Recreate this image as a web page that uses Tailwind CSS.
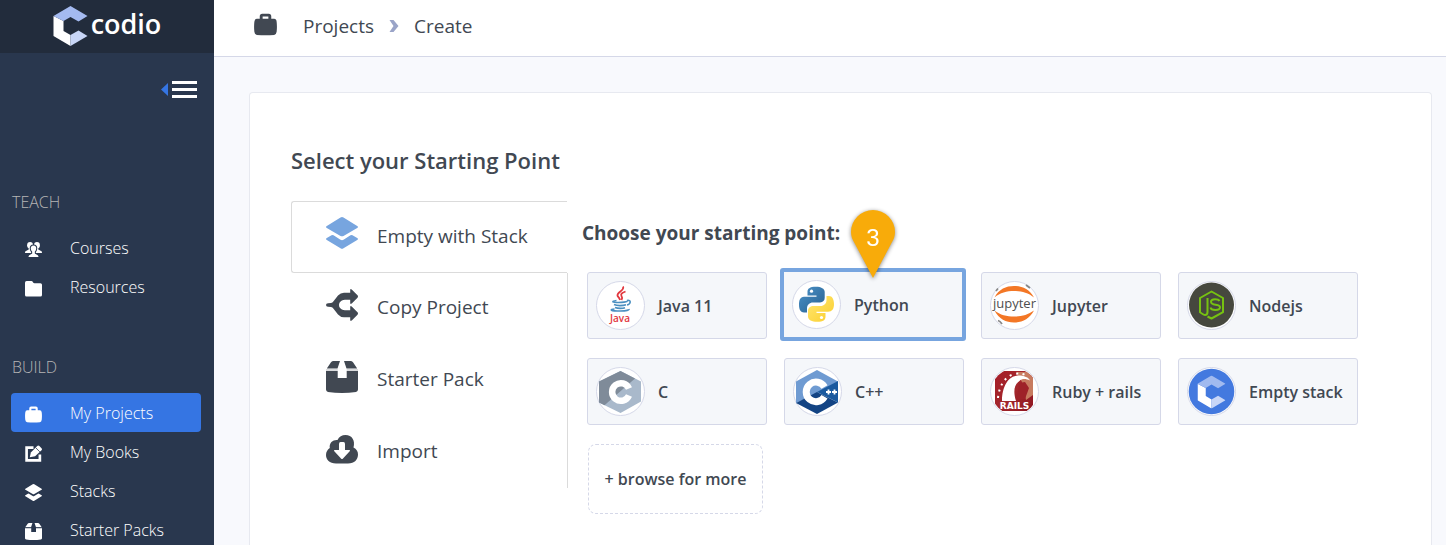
<!DOCTYPE html>
<html lang="en">
<head>
<meta charset="utf-8">
<meta name="viewport" content="width=device-width, initial-scale=1">
<title>Codio - Create Project</title>
<script src="https://cdn.jsdelivr.net/npm/@tailwindcss/browser@4"></script>
</head>
<body class="flex h-screen overflow-hidden bg-[#f8f9fd] font-['Open_Sans',sans-serif] text-[#414852]">
<svg class="hidden" aria-hidden="true">
  <symbol id="briefcase" viewBox="0 0 32 32"><path fill="currentColor" fill-rule="evenodd" d="M8 8V4.500Q8 1 11.500 1h9Q24 1 24 4.500V8h4q3 0 3.500 4 .8 7 0 14-.5 4-3.500 4.500-12 1-24 0Q1 30 .5 26q-.8-7 0-14Q1 8 4 8zM12 8h8V5h-8z"/></symbol>
  <symbol id="layers" viewBox="0 0 32 32"><path fill="currentColor" d="M14.500.6Q16-.4 17.500.6L31.200 9q1.600 1 0 2L17.500 18.900q-1.500.9-3 0L.8 11q-1.600-1 0-2zM.8 21 5.500 18.200q1-.6 2 0l7 4.500q1.500.9 3 0l7-4.500q1-.6 2 0L31.200 21q1.600 1 0 2L17.500 31.300q-1.500 1-3 0L.8 23q-1.600-1 0-2z"/></symbol>
  <symbol id="share" viewBox="0 0 32 32"><path fill="currentColor" fill-rule="evenodd" d="M0 16Q0 14.300 2 14.200l3-.2q1.500-.2 2.500-1.800L12 6.500Q14.500 3.700 18 3.700h6.200V1.200Q24.200-.8 26 .8l5.500 5.500q1 1.200 0 2.400L26 14.200q-1.800 1.600-1.800-.5v-3H19q-3.500 0-5.500 3-1 2.300 0 4.600 2 3 5.500 3h5.200v-3q0-2.100 1.800-.5l5.500 5.500q1 1.200 0 2.400L26 31.200q-1.800 1.600-1.800-.4v-2.500H18q-3.500 0-6-2.800l-4.500-5.700Q6.500 18.200 5 18l-3-.2Q0 17.700 0 16z"/></symbol>
  <symbol id="box" viewBox="0 0 32 32"><path fill="currentColor" d="M7.500 0H14l-2.500 7.500H.8L5 1.300Q6 0 7.500 0zM18 0h6.500Q26 0 27 1.300l4.200 6.200H20.500zM0 10h11.700v7h9v-7H32v18.500q0 2-2 2.400-14 2-28 0-2-.4-2-2.400z"/><path fill="currentColor" opacity=".2" d="M0 8h11.700v2H0zM20.700 8H32v2H20.700z"/></symbol>
  <symbol id="cloud" viewBox="0 0 32 32"><path fill="currentColor" fill-rule="evenodd" d="M3.800 15C3 9.500 7.300 6.500 11.500 7 13 3.500 16 2 19.500 2 26 2 29.500 7.500 27.500 14.500 30.500 16 32 18.500 32 21.500c0 5-3.500 9-10 9H10C3.500 30.500 0 26.500 0 22c0-3 1.500-5.500 3.800-7zM13 11v6H8.800q-1.500 0-.5 1.300l6.700 7.200q1 1 2 0l6.700-7.200q1-1.300-.5-1.300H19v-6q0-2-1.500-2h-3Q13 9 13 11z"/></symbol>
  <symbol id="users" viewBox="0 0 32 32"><g fill="currentColor"><ellipse cx="9.500" cy="8" rx="5.500" ry="6"/><ellipse cx="22.500" cy="8" rx="5.500" ry="6"/><path d="M7 12h18v4l6 3.500q1 .7 1 3H0q0-2.300 1-3L7 16z"/></g><path fill="currentColor" stroke="#29374e" stroke-width="2" d="M16 7.500c4.500 0 6.500 3 6 7.500-.3 2.500-1.500 4-2.500 5.500v2.500l5 3q2 1.200 2 5h-21q0-3.800 2-5l5-3v-2.500C11.500 19 10.300 17.500 10 15c-.5-4.500 1.500-7.500 6-7.500z"/></symbol>
  <symbol id="folder" viewBox="0 0 32 32"><path fill="currentColor" d="M3 2h9q2 0 3 2t3 2h11q3 0 3 3v19q0 3-3 3H3q-3 0-3-3V5q0-3 3-3z"/></symbol>
  <symbol id="edit" viewBox="0 0 32 32"><path fill="none" stroke="currentColor" stroke-width="5" d="M16 5H3v24h25V18"/><path fill="currentColor" d="m9 23 2-9L23 2q2-2 4 0l4 4q2 2 0 4L19 21z"/><path stroke="#29374e" stroke-width="1.500" d="m20 5 8 8"/></symbol>
  <symbol id="codio" viewBox="0 0 34 40"><path fill="#fff" d="M0 10 10 15v10l7 4v11L0 30z"/><path class="fill-(--top)" d="M0 10 17 0l17 10-9 5.500-8-4.500-7 4z"/><path fill="#c8d6f7" d="M17 29v11l17-10-9-5.500z"/></symbol>
</svg>

<aside class="flex w-[214px] shrink-0 flex-col bg-[#29374e]">
  <a href="#" aria-label="Codio" class="flex h-[53px] shrink-0 items-center justify-center gap-[3px] bg-[#222c3c] pb-[2px] text-white">
    <svg class="h-10 w-[35px] [--top:#a4baf0]"><use href="#codio"/></svg>
    <span class="pb-1 text-[27px] leading-8 font-semibold">codio</span>
  </a>
  <button type="button" aria-label="Collapse menu" class="mt-7 mr-[17px] flex h-6 items-center gap-1 self-end">
    <svg class="h-[13px] w-[7px]" viewBox="0 0 7 13"><path fill="#3575e3" d="M7 0v13L0 6.500z"/></svg>
    <svg class="h-[17px] w-[25px]" viewBox="0 0 25 17"><path stroke="#fff" stroke-width="3" d="M0 1.500h25M0 8.500h25M0 15.500h25"/></svg>
  </button>
  <nav class="mt-[92px] text-base font-light text-white">
    <h2 class="px-3 leading-6 font-light text-[#b5b5b5]">TEACH</h2>
    <ul class="mt-[14px] mr-[13px] ml-[11px]">
      <li><a href="#" class="flex h-[39px] items-center gap-7 pl-[14px]"><svg class="mt-1 size-[17px]"><use href="#users"/></svg>Courses</a></li>
      <li><a href="#" class="flex h-[39px] items-center gap-7 pl-[14px]"><svg class="mt-1 size-[17px]"><use href="#folder"/></svg>Resources</a></li>
    </ul>
    <h2 class="mt-[49px] px-3 leading-6 font-light text-[#b5b5b5]">BUILD</h2>
    <ul class="mt-[14px] mr-[13px] ml-[11px]">
      <li><a href="#" aria-current="page" class="flex h-[39px] items-center gap-7 rounded bg-[#3575e3] pl-[14px]"><svg class="mt-1 size-[17px]"><use href="#briefcase"/></svg>My Projects</a></li>
      <li><a href="#" class="flex h-[39px] items-center gap-7 pl-[14px]"><svg class="mt-1 size-[17px]"><use href="#edit"/></svg>My Books</a></li>
      <li><a href="#" class="flex h-[39px] items-center gap-7 pl-[14px]"><svg class="mt-1 size-[17px]"><use href="#layers"/></svg>Stacks</a></li>
      <li><a href="#" class="flex h-[39px] items-center gap-7 pl-[14px]"><svg class="mt-1 size-[17px]"><use href="#box"/></svg>Starter Packs</a></li>
    </ul>
  </nav>
</aside>

<div class="flex min-w-0 flex-1 flex-col">
  <header class="flex h-[57px] shrink-0 items-center border-b border-[#d5d8e8] bg-white pb-1 pl-10 text-[19px]">
    <svg class="mr-[26px] mb-1 size-[23px]"><use href="#briefcase"/></svg>
    <nav aria-label="Breadcrumb" class="flex items-center gap-[15px]">
      <a href="#">Projects</a>
      <svg class="h-3 w-[10px]" viewBox="0 0 9 12"><path fill="#9aa4c8" d="M0 0h4l5 6-5 6H0l4-6z"/></svg>
      <span aria-current="page">Create</span>
    </nav>
  </header>

  <main class="mt-[35px] mr-[14px] ml-[35px] flex-1 rounded-t border border-b-0 border-[#e7e9f0] bg-white pt-[51px] pl-[41px]">
    <h1 class="text-[22px] leading-8 font-semibold">Select your Starting Point</h1>
    <div class="mt-[25px] flex items-start">
      <div role="tablist" class="grid h-[287px] w-[277px] shrink-0 grid-rows-4 text-[19px]">
        <button type="button" role="tab" aria-selected="true" class="mr-px flex items-center gap-[19px] rounded-l-[3px] border border-r-0 border-[#dbdbdb] pb-[2px] pl-[34px]"><svg class="mb-1.5 size-8 text-[#77a5df]"><use href="#layers"/></svg>Empty with Stack</button>
        <button type="button" role="tab" aria-selected="false" class="flex items-center gap-[19px] border-r border-[#dbdbdb] pb-[2px] pl-[35px]"><svg class="mb-1.5 size-8"><use href="#share"/></svg>Copy Project</button>
        <button type="button" role="tab" aria-selected="false" class="flex items-center gap-[19px] border-r border-[#dbdbdb] pb-[2px] pl-[35px]"><svg class="mb-1 size-8"><use href="#box"/></svg>Starter Pack</button>
        <button type="button" role="tab" aria-selected="false" class="flex items-center gap-[19px] border-r border-[#dbdbdb] pb-[2px] pl-[35px]"><svg class="mb-1 size-8"><use href="#cloud"/></svg>Import</button>
      </div>

      <section role="tabpanel" class="pt-[18px] pl-[14px]">
        <h2 class="text-[19px] leading-7 font-bold">Choose your starting point:</h2>
        <div class="mt-[25px] ml-[5px] grid grid-cols-[repeat(4,180px)] gap-x-[17px] gap-y-[19px] text-base font-semibold">
          <button type="button" class="flex h-[67px] items-center gap-[13px] rounded-[3px] border border-[#d5d8e8] bg-[#f5f7fa] pl-2">
            <svg class="size-[49px]" viewBox="0 0 49 49"><circle cx="24.500" cy="24.500" r="24" fill="#fff" stroke="#d5d8e8"/>
              <path fill="none" stroke="#e2383f" stroke-width="1.800" d="M27 5.500c2 4-6 5.500-5.500 9 .2 1.500 2 2 2.500 4.500M29.500 10.500c-4 1.500-5 2.500-4 4.500 1 1.500 1 2.500 0 4"/>
              <path fill="none" stroke="#4a8fc0" stroke-width="1.600" d="M20.500 19.500c-6 1-4 2 2 2 4 0 7-.3 9-1.200M31 19.500c4.500-1 4 3.500 0 4.500M18 23.500c3 1.500 9 1.300 12 .2M19 26.500c3 1.200 8 1 10 .2M18.500 28c-5 .5-5 2 6 2 6 0 9-1 8.500-2"/>
              <text x="24" y="41" text-anchor="middle" fill="#e2383f" font-size="10" font-weight="600">Java</text></svg>
            Java 11</button>

          <div class="relative h-[67px]">
            <button type="button" aria-pressed="true" class="-mt-1 -ml-1 flex h-[73px] w-[186px] items-center gap-[13px] rounded-[3px] border-4 border-[#77a5df] bg-[#f5f7fa] pl-2">
              <svg class="size-[49px]" viewBox="0 0 49 49"><defs>
                <linearGradient id="pb" x2="1" y2="1"><stop stop-color="#4b92c9"/><stop offset="1" stop-color="#28608f"/></linearGradient>
                <linearGradient id="py" x2="1" y2="1"><stop stop-color="#ffe873"/><stop offset="1" stop-color="#fbce2d"/></linearGradient></defs>
                <circle cx="24.500" cy="24.500" r="24" fill="#fff" stroke="#d5d8e8"/>
                <path fill="url(#pb)" d="M24 6.800c-6.500 0-8.500 2-8.500 5v3.700h9v1.300H12c-4 0-5 3.700-5 8 0 5 1.800 7.700 5 7.700h3v-4c0-3.500 2.500-6 6-6h7c3 0 4.700-2 4.700-4.700v-6c0-3-3.700-5-8.700-5z"/>
                <path fill="url(#py)" d="M25 41.800c6.500 0 8.500-2 8.500-5v-3.700h-9v-1.300H36c4 0 6-2.700 6-7.700 0-4.500-1.800-8-5-8h-2.500v4c0 3.500-2.500 6-6 6h-7c-3 0-5.500 2-5.500 4.700v6c0 3 4 5 9 5z"/>
                <circle cx="19.500" cy="11.200" r="1.600" fill="#fff"/><circle cx="29.500" cy="37.500" r="1.600" fill="#fff"/></svg>
              Python</button>
            <svg class="absolute top-[-67px] left-[62px] h-[78px] w-[54px] overflow-visible drop-shadow-[0_1px_2px_#0007]" viewBox="0 0 54 78" role="img" aria-label="Step 3"><path fill="#f8ab0a" d="M27 73 9 39C6 34 5 31 5 27a22 22 0 0 1 44 0c0 4-1 7-4 12z"/><text x="27" y="41" text-anchor="middle" fill="#fff" font-size="24" font-weight="400" font-family="Liberation Sans">3</text></svg>
          </div>

          <button type="button" class="flex h-[67px] items-center gap-[13px] rounded-[3px] border border-[#d5d8e8] bg-[#f5f7fa] pl-2">
            <svg class="size-[49px]" viewBox="0 0 49 49"><circle cx="24.500" cy="24.500" r="24" fill="#fff" stroke="#d5d8e8"/>
              <path fill="#f37726" d="M4.500 16.500C9 8 16 5 24 5s15.500 3 20 11.500C38 11.500 31 10 24 10S10 11.500 4.500 16.500zM4.500 29.500C10 34 17 35.500 24 35.500s14-1.500 20-6C39.500 38 32 41.500 24 41.500S9 38 4.500 29.500z"/>
              <path fill="none" stroke="#888" stroke-width="1.800" d="m36 4 4 3M8 39.500q2 .5 4 3.500M6 10l2-2.500"/>
              <text x="24.500" y="26.500" text-anchor="middle" fill="#4e4e4e" font-size="13" font-weight="500">jupyter</text></svg>
            Jupyter</button>

          <button type="button" class="flex h-[67px] items-center gap-[13px] rounded-[3px] border border-[#d5d8e8] bg-[#f5f7fa] pl-2">
            <svg class="size-[49px]" viewBox="0 0 49 49"><circle cx="24.500" cy="24.500" r="24" fill="#fff" stroke="#d5d8e8"/><circle cx="24.500" cy="24" r="22.500" fill="#46483e"/>
              <path fill="none" stroke="#76c211" stroke-width="2" stroke-linejoin="round" d="M20.500 17v14q0 3-2.500 3-1 0-5-2.800V17L24.500 10.500 36 17v14.200L24.500 37.500l-4-2"/><path fill="none" stroke="#76c211" stroke-width="2" d="M32.500 20q-1-1.800-4.500-1.800-4 0-4 2.600c0 4.500 9 1.500 9 5.500q0 2.700-4.500 2.700-4.500 0-5-2.500"/></svg>
            Nodejs</button>

          <button type="button" class="flex h-[67px] items-center gap-[13px] rounded-[3px] border border-[#d5d8e8] bg-[#f5f7fa] pl-2">
            <svg class="size-[49px]" viewBox="0 0 49 49"><circle cx="24.500" cy="24.500" r="24" fill="#fff" stroke="#d5d8e8"/>
              <path fill="#a9b9cb" d="M24.500 4 45 14.500v20L24.500 46 3 35.500v-21z"/><path fill="#7f8b99" d="M24.500 4 39 11.500 8.500 38.300 3 35.500v-21z"/>
              <path fill="none" stroke="#fff" stroke-width="6.500" d="M33 21.500a8.800 8.800 0 1 0 0 7"/></svg>
            C</button>

          <button type="button" class="flex h-[67px] items-center gap-[13px] rounded-[3px] border border-[#d5d8e8] bg-[#f5f7fa] pl-2">
            <svg class="size-[49px]" viewBox="0 0 49 49"><circle cx="24.500" cy="24.500" r="24" fill="#fff" stroke="#d5d8e8"/>
              <path fill="#6f9bd2" d="M24 3 45 14.500 24 26 3 36V14.500z"/><path fill="#134484" d="m3 36 21-11 21 10.500L24 47z"/><path fill="#1b5a9f" d="M45 14v21.500L24 25z"/>
              <path fill="none" stroke="#fff" stroke-width="7" d="M31.500 20a9.800 9.800 0 1 0 0 9.800"/>
              <path stroke="#fff" stroke-width="1.800" d="M33 25h5M35.500 22.500v5M39 25h5M41.500 22.500v5"/></svg>
            C++</button>

          <button type="button" class="flex h-[67px] items-center gap-[13px] rounded-[3px] border border-[#d5d8e8] bg-[#f5f7fa] pl-2">
            <svg class="size-[49px]" viewBox="0 0 49 49"><defs><linearGradient id="rr" x2="1" y2="1"><stop stop-color="#a51d28"/><stop offset=".5" stop-color="#a3272c"/><stop offset="1" stop-color="#8d1522"/></linearGradient><clipPath id="disc"><circle cx="24.500" cy="24.500" r="23"/></clipPath></defs>
              <circle cx="24.500" cy="24.500" r="24" fill="#fff" stroke="#d5d8e8"/>
              <g clip-path="url(#disc)"><path fill="url(#rr)" d="M9 4h30q4 2 4 5v30q-2 4-6 5H12q-5-2-7-6V9q1-4 4-5z"/><path fill="#c77b60" d="M26 5h13q4 2 4 5v18l-7 5-4-18z"/><path fill="#9e2229" d="m29 16 6-1 4 6-4 11-8 1z"/>
              <path fill="#fff" d="M12 34C12 20 18 9 28 8.500c6 0 11 2 12 5-4-2-8-2-10 0-6 4-7 11-4 20.500z"/>
              <path stroke="#fff" stroke-width="2" stroke-dasharray="2 4.500" fill="none" d="M8 31c1-11 6-21 16-24 6-1 10 0 13 2"/></g>
              <text x="24.500" y="42" text-anchor="middle" fill="#fff" font-size="9" font-weight="800" font-family="DejaVu Sans">RAILS</text></svg>
            Ruby + rails</button>

          <button type="button" class="flex h-[67px] items-center gap-[13px] rounded-[3px] border border-[#d5d8e8] bg-[#f5f7fa] pl-2">
            <svg class="size-[49px] [--top:#a1baef]" viewBox="0 0 49 49"><circle cx="24.500" cy="24.500" r="24" fill="#fff" stroke="#d5d8e8"/><circle cx="24.500" cy="24.500" r="22.800" fill="#4379df"/><use href="#codio" x="10.500" y="8.500" width="28" height="33"/></svg>
            Empty stack</button>

          <button type="button" class="ml-px h-[70px] w-[175px] rounded-lg border border-dashed border-[#d5d8e8]">+ browse for more</button>
        </div>
      </section>
    </div>
  </main>
</div>
</body>
</html>
